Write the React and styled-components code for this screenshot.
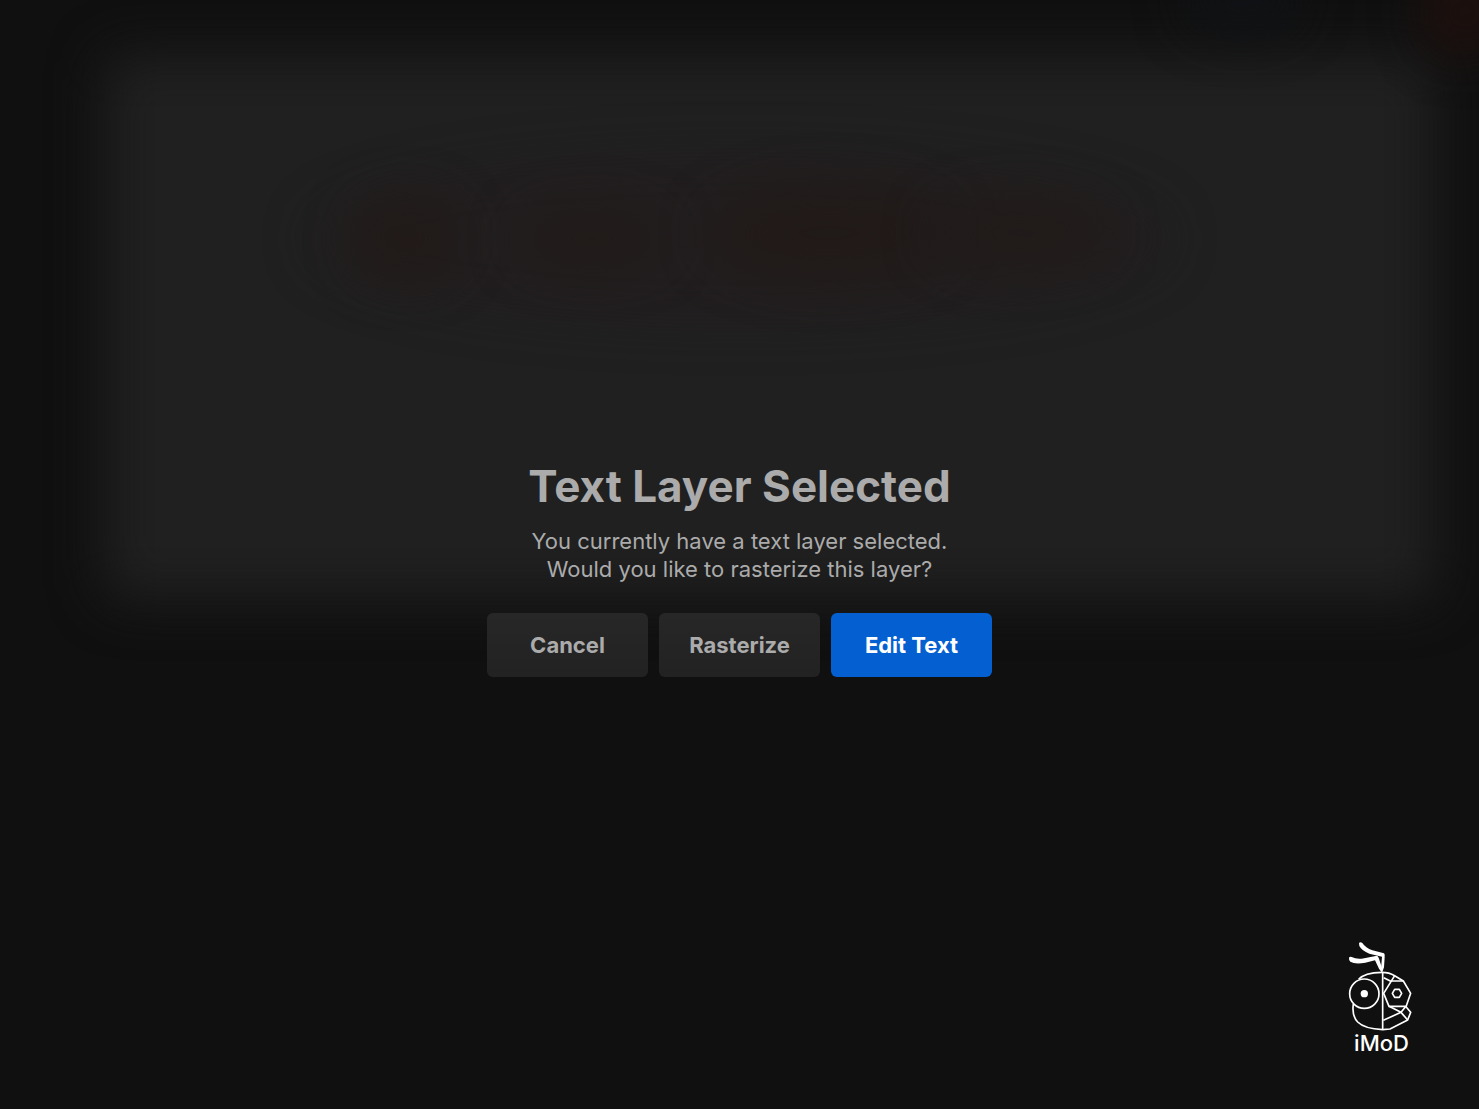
import styled, { createGlobalStyle } from "styled-components";

const GlobalStyle = createGlobalStyle`
  * {
    box-sizing: border-box;
  }
  body {
    margin: 0;
    background-color: #101010;
    font-family: Inter, "Liberation Sans", sans-serif;
  }
`;

const Page = styled.main`
  position: relative;
  min-height: 100vh;
  display: flex;
  align-items: center;
  justify-content: center;
  padding-top: 26px;
  overflow: hidden;
`;

// blurred canvas behind the dialog
const Backdrop = styled.div`
  position: absolute;
  inset: 0;
`;

const Canvas = styled.div`
  position: absolute;
  top: 5%;
  left: 7%;
  right: 3%;
  bottom: 46%;
  background-color: #202020;
  border-radius: 20px;
  filter: blur(26px);
`;

const Glow = styled.div`
  position: absolute;
  top: ${(props) => props.$top};
  left: ${(props) => props.$left};
  width: ${(props) => props.$width};
  height: ${(props) => props.$height};
  background-color: ${(props) => props.$color};
  border-radius: 50%;
  filter: blur(24px);
`;

const Dialog = styled.section`
  position: relative;
  display: flex;
  flex-direction: column;
  align-items: center;
  text-align: center;
  color: #ababab;
`;

const Title = styled.h1`
  margin: 0 0 13px;
  font-size: 44px;
  line-height: 56px;
  font-weight: 700;
`;

const Message = styled.p`
  margin: 0 0 30px;
  font-size: 22px;
  line-height: 28px;
`;

const ButtonRow = styled.div`
  display: flex;
  gap: 11px;
`;

const Button = styled.button`
  width: 161px;
  height: 64px;
  padding: 0;
  border: none;
  border-radius: 6px;
  background: ${(props) =>
    props.$primary ? "#0460d0" : "linear-gradient(#272727, #222222)"};
  color: ${(props) => (props.$primary ? "#ffffff" : "#ababab")};
  font-family: inherit;
  font-size: 22px;
  font-weight: 700;
  cursor: pointer;
`;

const Watermark = styled.figure`
  position: absolute;
  right: 67px;
  bottom: 54px;
  margin: 0;
  display: flex;
  flex-direction: column;
  align-items: center;
  color: #ffffff;
`;

const WatermarkName = styled.figcaption`
  padding-left: 4px;
  font-size: 22px;
  line-height: 24px;
  font-weight: 500;
`;

const Mascot = () => (
  <svg width="65" height="90" viewBox="36 33 195 270" aria-hidden="true">
    <g fill="#ffffff">
      <path d="M72 39 Q76 34 82 39 Q92 54 112 61 L147 70 Q150 72 149 82 L147 112 L142 126 L138 118 L141 80 L103 71 Q80 62 73 48 Z" />
      <path d="M42 83 Q44 79 50 81 Q63 88 80 86 L126 77 Q130 78 132 86 L143 120 L140 127 L132 116 L120 91 L91 98 Q60 104 46 95 Q41 90 42 83 Z" />
      <circle cx="88" cy="191" r="11" />
    </g>
    <g fill="none" stroke="#ffffff" strokeWidth="5" strokeLinejoin="round">
      <circle cx="88" cy="191" r="44" />
      <path d="M71 148 Q88 128 141 127 Q162 127 179 137 L205 153 L227 190 L213 230 L227 247 L218 270 L165 297 L143 299 Q88 296 68 276 Q50 257 55 222" />
      <path d="M143 127 V299" />
      <path d="M146 143 L166 153 H205" />
      <path d="M179 137 L146 190 L162 229 H213 L198 247 L218 270" />
      <path d="M162 229 L198 247 L145 271" />
      <path d="M179 178 H193 L200 190 L193 202 H179 L172 190 Z" />
    </g>
  </svg>
);

const App = () => {
  return (
    <>
      <GlobalStyle />
      <Page>
        <Backdrop>
          <Canvas />
          <Glow
            $top="14%"
            $left="21%"
            $width="58%"
            $height="15%"
            $color="rgba(36, 28, 29, 0.5)"
          />
          <Glow
            $top="18%"
            $left="24%"
            $width="7%"
            $height="7%"
            $color="#211a18"
          />
          <Glow
            $top="19%"
            $left="35%"
            $width="10%"
            $height="5%"
            $color="#211b19"
          />
          <Glow
            $top="17%"
            $left="48%"
            $width="16%"
            $height="8%"
            $color="#211a18"
          />
          <Glow
            $top="18%"
            $left="63%"
            $width="12%"
            $height="6%"
            $color="#211b19"
          />
          <Glow
            $top="-3%"
            $left="96%"
            $width="6%"
            $height="8%"
            $color="#1e100e"
          />
          <Glow
            $top="-3%"
            $left="80%"
            $width="8%"
            $height="6%"
            $color="#101215"
          />
        </Backdrop>
        <Dialog role="dialog" aria-labelledby="dialog-title">
          <Title id="dialog-title">Text Layer Selected</Title>
          <Message>
            You currently have a text layer selected.
            <br />
            Would you like to rasterize this layer?
          </Message>
          <ButtonRow>
            <Button type="button">Cancel</Button>
            <Button type="button">Rasterize</Button>
            <Button type="button" $primary>
              Edit Text
            </Button>
          </ButtonRow>
        </Dialog>
        <Watermark>
          <Mascot />
          <WatermarkName>iMoD</WatermarkName>
        </Watermark>
      </Page>
    </>
  );
};

export default App;
